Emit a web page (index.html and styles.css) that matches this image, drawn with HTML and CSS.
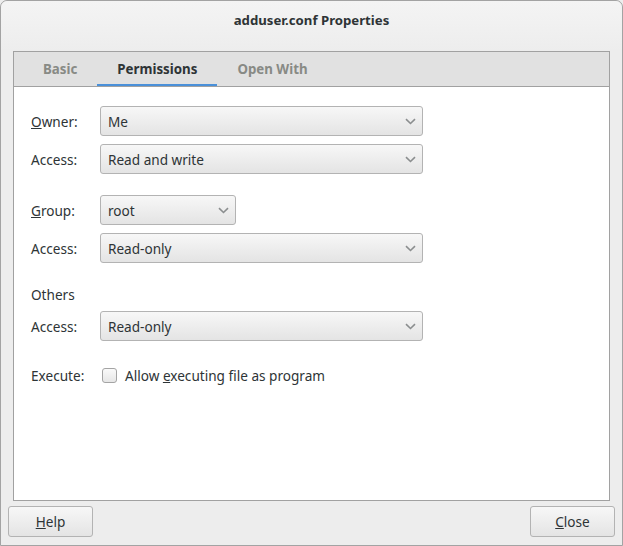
FILE: index.html
```html
<!DOCTYPE html>
<html>
<head>
<meta charset="utf-8">
<link rel="stylesheet" href="styles.css">
</head>
<body>
<div class="window">
  <div class="titlebar">adduser.conf Properties</div>
  <div class="notebook">
    <div class="tabs">
      <div class="tab">Basic</div>
      <div class="tab active">Permissions</div>
      <div class="tab">Open With</div>
    </div>
    <div class="page">
      <div class="row">
        <span class="label"><u>O</u>wner:</span>
        <div class="combo wide"><span>Me</span><svg class="chev" width="11" height="7" viewBox="0 0 11 7"><path d="M1 1.2 L5.5 5.5 L10 1.2" fill="none" stroke="#8b8e8f" stroke-width="1.6"/></svg></div>
      </div>
      <div class="row gap8">
        <span class="label">Access:</span>
        <div class="combo wide"><span>Read and write</span><svg class="chev" width="11" height="7" viewBox="0 0 11 7"><path d="M1 1.2 L5.5 5.5 L10 1.2" fill="none" stroke="#8b8e8f" stroke-width="1.6"/></svg></div>
      </div>
      <div class="row gap21">
        <span class="label"><u>G</u>roup:</span>
        <div class="combo narrow"><span>root</span><svg class="chev" width="11" height="7" viewBox="0 0 11 7"><path d="M1 1.2 L5.5 5.5 L10 1.2" fill="none" stroke="#8b8e8f" stroke-width="1.6"/></svg></div>
      </div>
      <div class="row gap8">
        <span class="label">Access:</span>
        <div class="combo wide"><span>Read-only</span><svg class="chev" width="11" height="7" viewBox="0 0 11 7"><path d="M1 1.2 L5.5 5.5 L10 1.2" fill="none" stroke="#8b8e8f" stroke-width="1.6"/></svg></div>
      </div>
      <div class="heading">Others</div>
      <div class="row gap8">
        <span class="label">Access:</span>
        <div class="combo wide"><span>Read-only</span><svg class="chev" width="11" height="7" viewBox="0 0 11 7"><path d="M1 1.2 L5.5 5.5 L10 1.2" fill="none" stroke="#8b8e8f" stroke-width="1.6"/></svg></div>
      </div>
      <div class="row exec">
        <span class="label">Execute:</span>
        <span class="check"></span>
        <span class="checktext">Allow <u>e</u>xecuting file as program</span>
      </div>
    </div>
  </div>
  <div class="footer">
    <div class="button"><u>H</u>elp</div>
    <div class="button"><u>C</u>lose</div>
  </div>
</div>
</body>
</html>
```
FILE: styles.css
```css
html, body {
  margin: 0;
  padding: 0;
  background: #ededed;
}
body {
  font-family: "Noto Sans", "DejaVu Sans", sans-serif;
  font-size: 13.6px;
  color: #2e3436;
}
.window {
  width: 623px;
  height: 546px;
  box-sizing: border-box;
  border: 1px solid #a3a3a3;
  border-radius: 7px 7px 0 0;
  background: #ededed;
  display: flex;
  flex-direction: column;
}
.titlebar {
  height: 50px;
  box-sizing: border-box;
  padding-top: 10px;
  text-align: center;
  font-weight: bold;
  font-size: 13.2px;
  line-height: 18px;
  color: #2e3436;
  background: linear-gradient(#f4f4f4, #ededed);
  border-radius: 7px 7px 0 0;
}
.notebook {
  margin: 0 12px;
  height: 450px;
  box-sizing: border-box;
  border: 1px solid #a1a1a1;
  display: flex;
  flex-direction: column;
}
.tabs {
  height: 35px;
  box-sizing: border-box;
  background: #e1e1e1;
  border-bottom: 1px solid #a1a1a1;
  display: flex;
  padding-left: 9px;
}
.tab {
  padding: 1px 20px 0 20px;
  font-weight: bold;
  font-size: 13.3px;
  color: #888a85;
  line-height: 33px;
  box-sizing: border-box;
  height: 34px;
}
.tab.active {
  color: #2e3436;
  border-bottom: 2px solid #4a90d9;
}
.page {
  flex: 1;
  background: #ffffff;
  padding: 19px 0 0 17px;
  display: flex;
  flex-direction: column;
}
.row {
  display: flex;
  align-items: center;
  height: 30px;
}
.gap8 { margin-top: 8px; }
.gap21 { margin-top: 21px; }
.label {
  width: 69px;
  flex: none;
}
.heading {
  margin-top: 23px;
  height: 17px;
  line-height: 17px;
}
.combo {
  height: 30px;
  box-sizing: border-box;
  border: 1px solid #b3b3b3;
  border-radius: 3px;
  background: linear-gradient(#f7f7f7, #e4e4e4);
  display: flex;
  align-items: center;
  justify-content: space-between;
  padding: 0 6px 0 7px;
  color: #2e3436;
}
.combo.wide { width: 323px; }
.combo.narrow { width: 136px; }
.exec {
  margin-top: 24px;
  height: 20px;
}
.check {
  width: 15px;
  height: 15px;
  box-sizing: border-box;
  border: 1px solid #a4a4a4;
  border-radius: 3px;
  background: linear-gradient(#fafafa, #e6e6e6);
  margin-left: 2px;
  flex: none;
}
.checktext {
  margin-left: 8px;
}
.footer {
  display: flex;
  justify-content: space-between;
  padding: 5px 7px 0 7px;
}
.button {
  width: 85px;
  height: 31px;
  box-sizing: border-box;
  border: 1px solid #b3b3b3;
  border-radius: 3px;
  background: linear-gradient(#f7f7f7, #e4e4e4);
  text-align: center;
  line-height: 30px;
  color: #2e3436;
}
```
